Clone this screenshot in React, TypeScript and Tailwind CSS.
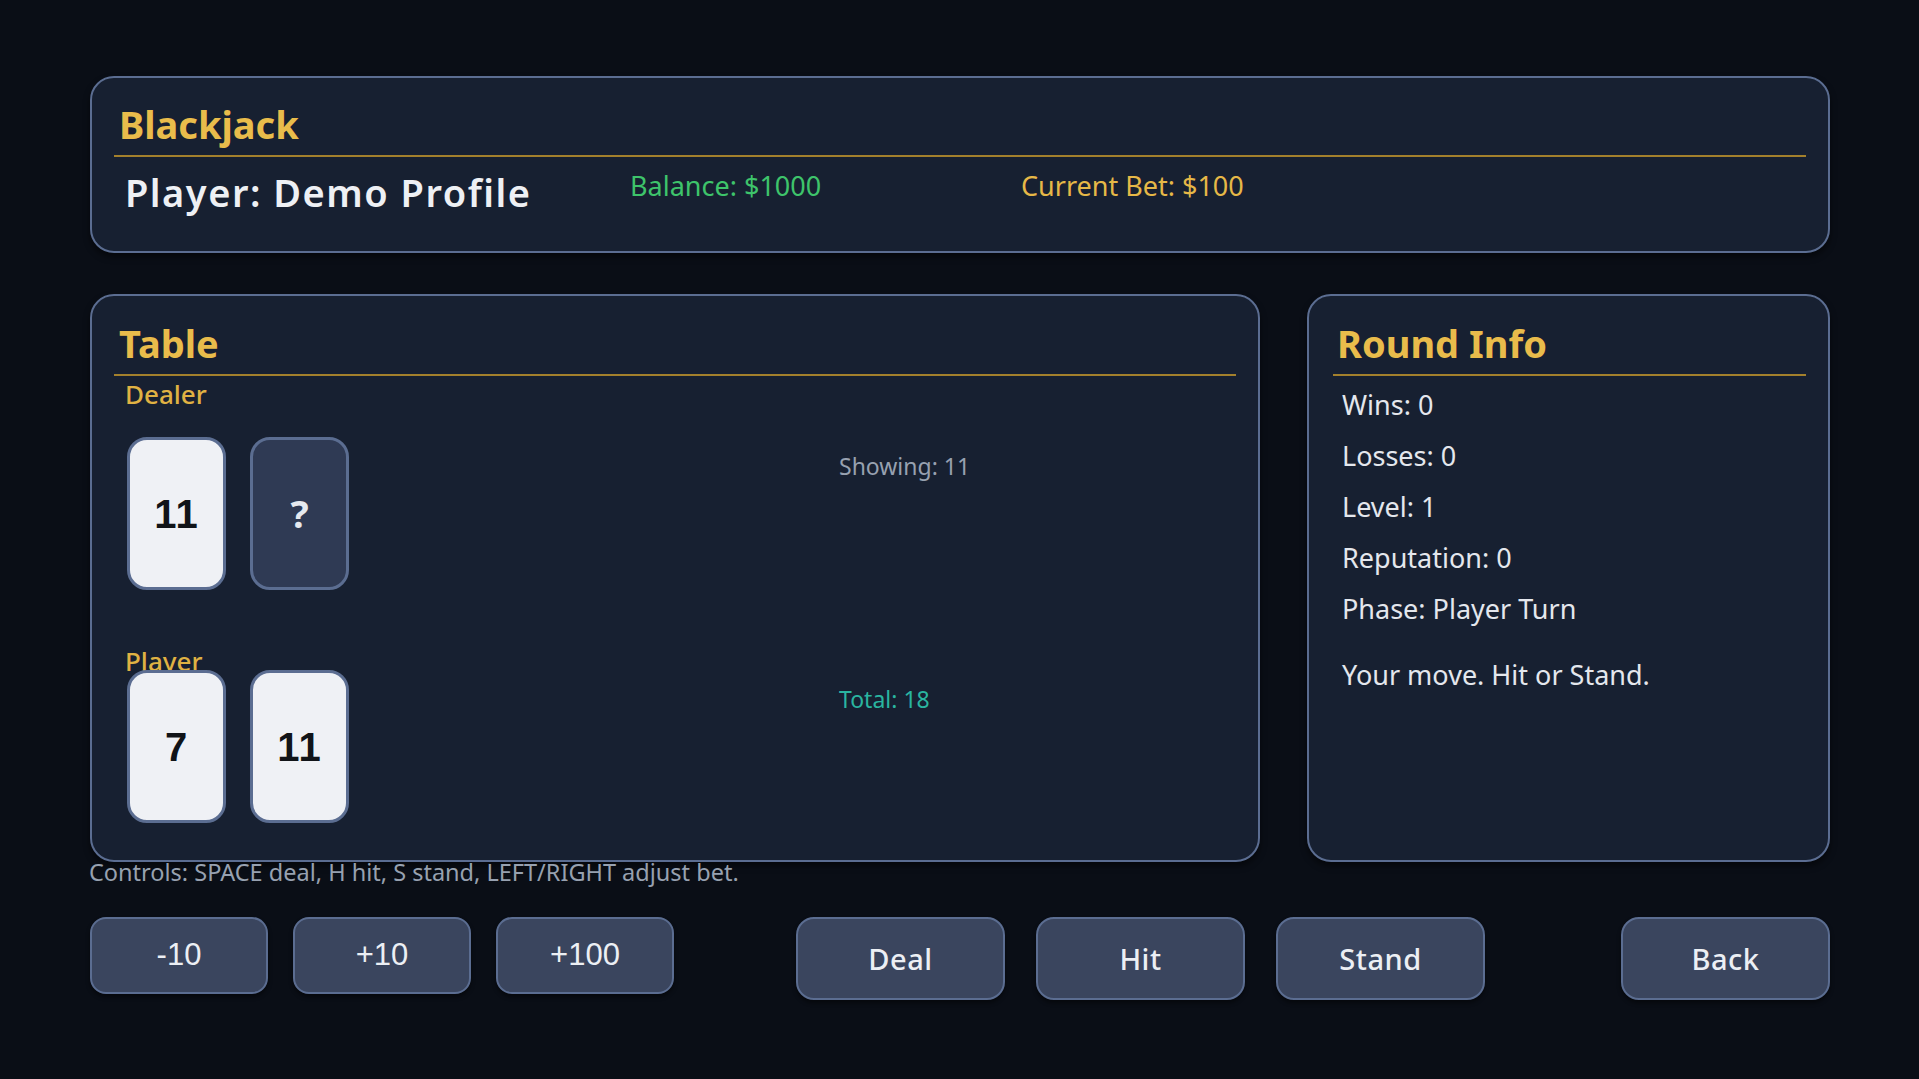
import React from "react";

const F = { fontFamily: '"Noto Sans", "Open Sans", sans-serif' };
const A = { fontFamily: '"Liberation Sans", Arial, sans-serif' };

function Card({ value, hidden }: { value: string; hidden?: boolean }) {
  return (
    <div
      className={`flex h-[153px] w-[99px] items-center justify-center rounded-[20px] border-[3px] border-[#5b6d91] ${
        hidden ? "bg-[#2f3a54]" : "bg-[#eff1f5]"
      }`}
    >
      {hidden ? (
        <span className="text-[38px] font-bold text-[#e6e9ef]" style={F}>
          ?
        </span>
      ) : (
        <span className="text-[40px] font-bold leading-none tracking-[1px] text-[#111418]" style={A}>
          {value}
        </span>
      )}
    </div>
  );
}

function SmallBtn({ label }: { label: string }) {
  return (
    <button
      className="flex h-[77px] w-[178px] items-center justify-center rounded-[16px] border-2 border-[#5b6d91] bg-[#3a455e] text-[31px] text-[#eceff4] shadow-[0_3px_4px_rgba(0,0,0,0.45)]"
      style={A}
    >
      {label}
    </button>
  );
}

function BigBtn({ label, className = "" }: { label: string; className?: string }) {
  return (
    <button
      className={`flex h-[83px] w-[209px] items-center justify-center rounded-[18px] border-2 border-[#5b6d91] bg-[#3a455e] text-[29px] font-medium tracking-[0.5px] text-[#eceff4] shadow-[0_3px_4px_rgba(0,0,0,0.45)] ${className}`}
      style={F}
    >
      {label}
    </button>
  );
}

export default function App() {
  const stats = ["Wins: 0", "Losses: 0", "Level: 1", "Reputation: 0", "Phase: Player Turn"];
  return (
    <div className="min-h-screen w-full bg-[#0a0e16] pl-[90px] pt-[76px]" style={F}>
      <div className="flex w-[1740px] flex-col">
        {/* Header */}
        <div className="h-[177px] rounded-[24px] border-2 border-[#5b6d91] bg-[#172031] px-[22px] pt-[22px] shadow-[0_4px_6px_rgba(0,0,0,0.5)]">
          <div className="border-b-2 border-[#a3802c] pb-[7px] pl-[5px] text-[38px] font-bold leading-[48px] text-[#e9bc4b]">
            Blackjack
          </div>
          <div className="mt-[13px] flex items-start">
            <div className="w-[516px] pl-[11px] text-[38px] font-semibold leading-[44px] tracking-[1.5px] text-[#eef0f4]">
              Player: Demo Profile
            </div>
            <div className="w-[391px] text-[27px] leading-[32px] text-[#3ec46b]">Balance: $1000</div>
            <div className="text-[27px] leading-[32px] text-[#e6b847]">Current Bet: $100</div>
          </div>
        </div>

        {/* Main row */}
        <div className="mt-[41px] flex gap-[47px]">
          {/* Table */}
          <div className="h-[568px] w-[1170px] rounded-[24px] border-2 border-[#5b6d91] bg-[#172031] px-[22px] pt-[23px] shadow-[0_4px_6px_rgba(0,0,0,0.5)]">
            <div className="border-b-2 border-[#a3802c] pb-[7px] pl-[5px] text-[38px] font-bold leading-[48px] text-[#e9bc4b]">
              Table
            </div>
            <div className="mt-[4px] pl-[11px] text-[26px] font-medium leading-[28px] text-[#e0b243]">Dealer</div>
            <div className="mt-[29px] flex pl-[13px]">
              <div className="flex w-[712px] gap-[24px]">
                <Card value="11" />
                <Card value="?" hidden />
              </div>
              <div className="mt-[15px] text-[23px] leading-[28px] text-[#97a1b0]">Showing: 11</div>
            </div>
            <div className="mt-[57px] pl-[11px] text-[26px] font-medium leading-[28px] text-[#e0b243]">Player</div>
            <div className="relative mt-[-5px] flex pl-[13px]">
              <div className="flex w-[712px] gap-[24px]">
                <Card value="7" />
                <Card value="11" />
              </div>
              <div className="mt-[15px] text-[23px] leading-[28px] text-[#2ab5a0]">Total: 18</div>
            </div>
          </div>

          {/* Round Info */}
          <div className="h-[568px] w-[523px] rounded-[24px] border-2 border-[#5b6d91] bg-[#172031] pl-[24px] pr-[22px] pt-[23px] shadow-[0_4px_6px_rgba(0,0,0,0.5)]">
            <div className="border-b-2 border-[#a3802c] pb-[7px] pl-[4px] text-[38px] font-bold leading-[48px] text-[#e9bc4b]">
              Round Info
            </div>
            <div className="mt-[4px] flex flex-col pl-[9px]">
              {stats.map((s) => (
                <div key={s} className="flex h-[51px] items-center text-[27px] text-[#e4e7ed]">
                  {s}
                </div>
              ))}
              <div className="mt-[15px] flex h-[51px] items-center text-[27px] text-[#e4e7ed]">
                Your move. Hit or Stand.
              </div>
            </div>
          </div>
        </div>

        <div className="ml-[-1px] mt-[-2px] text-[23.5px] leading-[24px] text-[#97a1b0]">
          Controls: SPACE deal, H hit, S stand, LEFT/RIGHT adjust bet.
        </div>

        {/* Buttons */}
        <div className="mt-[33px] flex items-start">
          <div className="flex gap-[25px]">
            <SmallBtn label="-10" />
            <SmallBtn label="+10" />
            <SmallBtn label="+100" />
          </div>
          <div className="ml-[122px] flex gap-[31px]">
            <BigBtn label="Deal" />
            <BigBtn label="Hit" />
            <BigBtn label="Stand" />
          </div>
          <BigBtn label="Back" className="ml-auto" />
        </div>
      </div>
    </div>
  );
}
